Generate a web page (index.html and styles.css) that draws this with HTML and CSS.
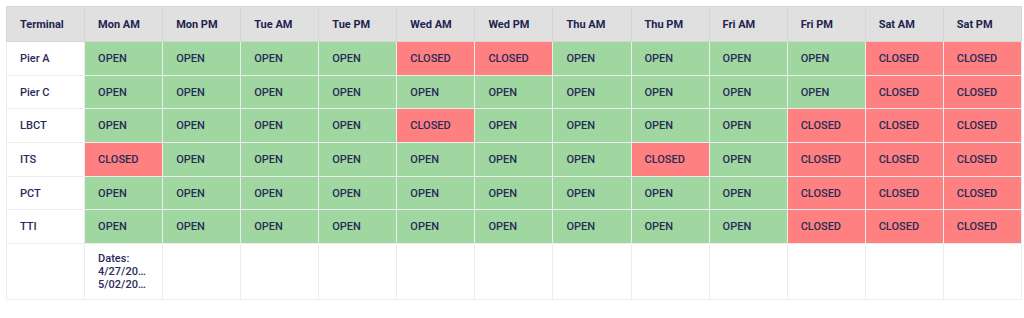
FILE: index.html
```html
<!DOCTYPE html>
<html lang="en">
<head>
<meta charset="utf-8">
<title>Terminal Schedule</title>
<link rel="stylesheet" href="styles.css">
</head>
<body>
<div class="wrap">
<table class="sched">
  <colgroup><col span="13" class="col"></colgroup>
  <thead>
    <tr>
      <th>Terminal</th><th>Mon AM</th><th>Mon PM</th><th>Tue AM</th><th>Tue PM</th><th>Wed AM</th><th>Wed PM</th><th>Thu AM</th><th>Thu PM</th><th>Fri AM</th><th>Fri PM</th><th>Sat AM</th><th>Sat PM</th>
    </tr>
  </thead>
  <tbody>
    <tr><td class="name">Pier A</td><td class="open">OPEN</td><td class="open">OPEN</td><td class="open">OPEN</td><td class="open">OPEN</td><td class="closed">CLOSED</td><td class="closed">CLOSED</td><td class="open">OPEN</td><td class="open">OPEN</td><td class="open">OPEN</td><td class="open">OPEN</td><td class="closed">CLOSED</td><td class="closed">CLOSED</td></tr>
    <tr><td class="name">Pier C</td><td class="open">OPEN</td><td class="open">OPEN</td><td class="open">OPEN</td><td class="open">OPEN</td><td class="open">OPEN</td><td class="open">OPEN</td><td class="open">OPEN</td><td class="open">OPEN</td><td class="open">OPEN</td><td class="open">OPEN</td><td class="closed">CLOSED</td><td class="closed">CLOSED</td></tr>
    <tr><td class="name">LBCT</td><td class="open">OPEN</td><td class="open">OPEN</td><td class="open">OPEN</td><td class="open">OPEN</td><td class="closed">CLOSED</td><td class="open">OPEN</td><td class="open">OPEN</td><td class="open">OPEN</td><td class="open">OPEN</td><td class="closed">CLOSED</td><td class="closed">CLOSED</td><td class="closed">CLOSED</td></tr>
    <tr><td class="name">ITS</td><td class="closed">CLOSED</td><td class="open">OPEN</td><td class="open">OPEN</td><td class="open">OPEN</td><td class="open">OPEN</td><td class="open">OPEN</td><td class="open">OPEN</td><td class="closed">CLOSED</td><td class="open">OPEN</td><td class="closed">CLOSED</td><td class="closed">CLOSED</td><td class="closed">CLOSED</td></tr>
    <tr><td class="name">PCT</td><td class="open">OPEN</td><td class="open">OPEN</td><td class="open">OPEN</td><td class="open">OPEN</td><td class="open">OPEN</td><td class="open">OPEN</td><td class="open">OPEN</td><td class="open">OPEN</td><td class="open">OPEN</td><td class="closed">CLOSED</td><td class="closed">CLOSED</td><td class="closed">CLOSED</td></tr>
    <tr><td class="name">TTI</td><td class="open">OPEN</td><td class="open">OPEN</td><td class="open">OPEN</td><td class="open">OPEN</td><td class="open">OPEN</td><td class="open">OPEN</td><td class="open">OPEN</td><td class="open">OPEN</td><td class="open">OPEN</td><td class="closed">CLOSED</td><td class="closed">CLOSED</td><td class="closed">CLOSED</td></tr>
    <tr class="dates-row">
      <td></td>
      <td class="dates"><span class="line">Dates:</span><span class="line">4/27/2024</span><span class="line">5/02/2024</span></td>
      <td></td><td></td><td></td><td></td><td></td><td></td><td></td><td></td><td></td><td></td><td></td>
    </tr>
  </tbody>
</table>
</div>
</body>
</html>
```
FILE: styles.css
```css
html, body {
  margin: 0;
  padding: 0;
  background: #ffffff;
}
.wrap {
  padding: 6px 2px 0 6px;
}
.sched {
  border-collapse: collapse;
  table-layout: fixed;
  width: 1016px;
  border: 1px solid #dedede;
  font-family: Roboto, "Liberation Sans", sans-serif;
  font-size: 11px;
  font-weight: 500;
  color: #272b57;
}
.sched th,
.sched td {
  border: 1px solid #ededed;
  padding: 0 13px;
  text-align: left;
  vertical-align: middle;
  white-space: nowrap;
  overflow: hidden;
}
.sched th {
  background: #e0e0e0;
  border-color: #d6d6d6;
  font-weight: 700;
  color: #1e2350;
  height: 34px;
}
.sched td {
  height: 32.7px;
}
.sched td.open {
  background: #a0d69f;
}
.sched td.closed {
  background: #ff8080;
}
.dates-row td {
  height: 55px;
}
.dates .line {
  display: block;
  line-height: 13px;
  overflow: hidden;
  text-overflow: ellipsis;
  white-space: nowrap;
}
```
